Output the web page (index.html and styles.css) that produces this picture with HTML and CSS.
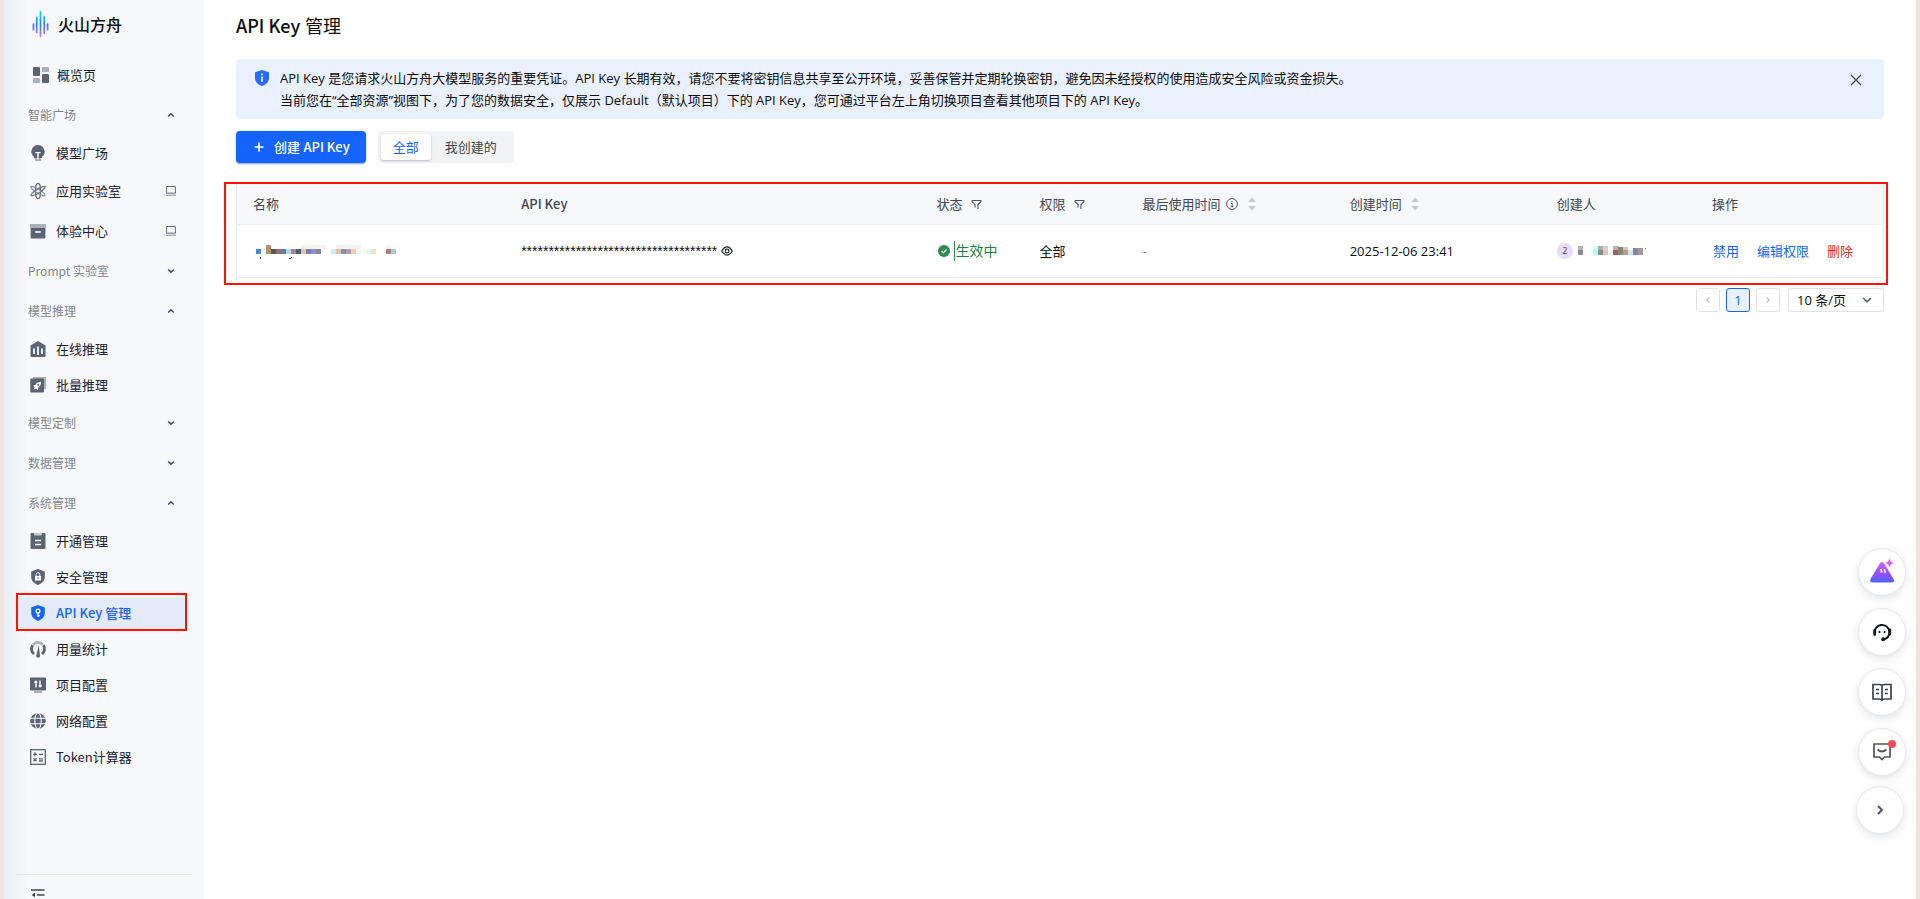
FILE: index.html
```
<!DOCTYPE html>
<html lang="zh-CN">
<head>
<meta charset="utf-8">
<title>API Key 管理</title>
<link rel="stylesheet" href="styles.css">
</head>
<body>
<svg class="defs" aria-hidden="true">
  <defs>
    <linearGradient id="flame" x1="0" y1="0" x2="0" y2="28" gradientUnits="userSpaceOnUse"><stop offset="0" stop-color="#22d8f0"/><stop offset=".5" stop-color="#2b7cff"/><stop offset="1" stop-color="#c07cf5"/></linearGradient>
    <linearGradient id="peak" x1="0" y1="0" x2="0" y2="1"><stop offset="0" stop-color="#d35cf5"/><stop offset=".5" stop-color="#a050fa"/><stop offset="1" stop-color="#4f62fa"/></linearGradient>
    <symbol id="up" viewBox="0 0 10 10"><path d="M2.2 6.5 5 3.8l2.8 2.7" fill="none" stroke="#3d485c" stroke-width="1.5"/></symbol>
    <symbol id="down" viewBox="0 0 10 10"><path d="M2.2 3.5 5 6.2l2.8-2.7" fill="none" stroke="#3d485c" stroke-width="1.5"/></symbol>
    <symbol id="device" viewBox="0 0 10 10"><path d="M.6.5h8.8v6.7H.6z" fill="none" stroke="#626b7a"/><path d="M0 9.3h10" stroke="#8a919d"/></symbol>
    <symbol id="filter" viewBox="0 0 12 12"><path d="M1.2 1.6h9.6v1.6L7.6 6v4.8M1.2 1.6v1.6L4.4 6v3.4" fill="none" stroke="#4c5361" stroke-width="1.2"/></symbol>
    <symbol id="sort" viewBox="0 0 8 14"><path d="M4 .5 7.8 5H.2zM4 13.500.2 9h7.600z" fill="#c2c7d2"/></symbol>
  </defs>
</svg>
<div class="frame">
  <aside class="sidebar">
    <a class="brand" href="#">
      <svg class="brand-icon" viewBox="0 0 18 28"><path d="M1.500 14v6M5 7v16M9 1v26M13 6v18M16.500 14v6" stroke="url(#flame)" stroke-width="1.800" stroke-linecap="round"/></svg>
      <span>火山方舟</span>
    </a>
    <nav class="nav">
      <a class="item overview" href="#"><svg class="icon" viewBox="0 0 16 16"><rect width="7" height="9" rx="1" fill="#5b6474"/><rect x="9" width="7" height="5" rx="1" fill="#aab0ba"/><rect y="11" width="7" height="5" rx="1" fill="#aab0ba"/><rect x="9" y="7" width="7" height="9" rx="1" fill="#5b6474"/></svg>概览页</a>
      <button class="group" type="button">智能广场<svg class="mini"><use href="#up"/></svg></button>
      <a class="item" href="#"><svg class="icon" viewBox="0 0 16 16"><path d="M8 0a6.600 6.600 0 0 0-4 11.800V13h8v-1.200A6.600 6.600 0 0 0 8 0z" fill="#5b6474"/><path d="M5 13h6v3H5z" fill="#aab0ba"/><path d="M5.500 7.600h5M8 7.600V14" stroke="#fff" stroke-width="1.400"/></svg>模型广场</a>
      <a class="item tall" href="#"><svg class="icon" viewBox="0 0 16 16" fill="none" stroke-width="1.300"><ellipse cx="8" cy="8" rx="2.600" ry="7.600" stroke="#5b6474"/><path d="M.8 3.500C3 2.500 15.500 9.500 15 12.500 12.500 14 .5 6.500.8 3.500z" stroke="#8c939f"/><path d="M15.200 3.500C13 2.500.5 9.500 1 12.500c2.500 1.500 14.500-6 14.200-9z" stroke="#6d7684"/></svg>应用实验室<svg class="mini"><use href="#device"/></svg></a>
      <a class="item tall" href="#"><svg class="icon" viewBox="0 0 16 16"><path d="M0 1h16v4H0z" fill="#aab0ba"/><path d="M.6 5h14.800v9.500q0 1-1 1H1.600q-1 0-1-1z" fill="#5b6474"/><path d="M5.200 9h5.600" stroke="#fff" stroke-width="1.600"/></svg>体验中心<svg class="mini"><use href="#device"/></svg></a>
      <button class="group" type="button">Prompt 实验室<svg class="mini"><use href="#down"/></svg></button>
      <button class="group" type="button">模型推理<svg class="mini"><use href="#up"/></svg></button>
      <a class="item" href="#"><svg class="icon" viewBox="0 0 16 16"><path d="m8 0 7.500 4.500V15q0 1-1 1h-13q-1 0-1-1V4.500z" fill="#5b6474"/><path d="M4 7.500V13M8 5.500V14M12 7.500V13" stroke="#fff" stroke-width="1.700"/></svg>在线推理</a>
      <a class="item" href="#"><svg class="icon" viewBox="0 0 16 16"><path d="M3 0h12q1 0 1 1v11h-3V3H3z" fill="#aab0ba"/><rect x=".3" y="1.600" width="13.700" height="14" rx="1" fill="#5b6474"/><path d="M11 4.800c-3.200 0-4.600 1.400-5.500 3L3.200 8.400 4.500 10l-1 2.700 2.700-1L8 13l.4-2.500C10.200 9.400 11 7.800 11 4.800z" fill="#fff"/><circle cx="8.300" cy="7.700" r="1" fill="#5b6474"/></svg>批量推理</a>
      <button class="group" type="button">模型定制<svg class="mini"><use href="#down"/></svg></button>
      <button class="group" type="button">数据管理<svg class="mini"><use href="#down"/></svg></button>
      <button class="group" type="button">系统管理<svg class="mini"><use href="#up"/></svg></button>
      <a class="item" href="#"><svg class="icon" viewBox="0 0 16 16"><rect x=".5" width="15" height="16" rx="1" fill="#5b6474"/><path d="M4 0h8v1.500q0 1-1 1H5q-1 0-1-1z" fill="#c5cad1"/><path d="M5 7.500h6M5 11.500h6" stroke="#fff" stroke-width="1.400"/></svg>开通管理</a>
      <a class="item" href="#"><svg class="icon" viewBox="0 0 16 16"><path d="m8 0 6.800 2.500v6Q14.500 13 8 16 1.500 13 1.200 8.500v-6z" fill="#5b6474"/><rect x="5" y="7" width="6" height="4.500" fill="#fff"/><path d="M6.200 7V5.400a1.800 1.800 0 0 1 3.600 0V7" fill="none" stroke="#fff"/><path d="M8 8.300v1.800" stroke="#5b6474"/></svg>安全管理</a>
      <a class="item active" href="#" aria-current="page"><svg class="icon" viewBox="0 0 16 16"><path d="m8 0 6.800 2.500v6Q14.500 13 8 16 1.500 13 1.200 8.500v-6z" fill="#1664ff"/><circle cx="8" cy="6" r="1.900" fill="none" stroke="#fff" stroke-width="1.300"/><path d="M8 8v4M8 10.600h1.800" stroke="#fff" stroke-width="1.300"/></svg>API Key 管理</a>
      <a class="item" href="#"><svg class="icon" viewBox="0 0 16 16" fill="none" stroke-width="2.800"><path d="M3 3.800a6.400 6.400 0 0 1 10 0" stroke="#aab0ba"/><path d="M4 13A6.400 6.400 0 0 1 2.600 4.300M12 13a6.400 6.400 0 0 0 1.400-8.700" stroke="#5b6474"/><path d="M8.800 4.500 10 15a1.900 1.900 0 0 1-3.800-.5z" fill="#5b6474"/></svg>用量统计</a>
      <a class="item" href="#"><svg class="icon" viewBox="0 0 16 16"><rect y=".5" width="16" height="13" rx="1" fill="#5b6474"/><path d="M4 13.500h8V16H4z" fill="#aab0ba"/><path d="M6 3.500v7M10 3.500v7M4.300 5.200h3M8.700 8.700h3" stroke="#fff" stroke-width="1.400"/></svg>项目配置</a>
      <a class="item" href="#"><svg class="icon" viewBox="0 0 16 16"><circle cx="8" cy="8" r="7.800" fill="#5b6474"/><path d="M0 5.300h16M0 10.700h16" stroke="#f7f8fa" stroke-width="1.100"/><ellipse cx="8" cy="8" rx="3.200" ry="8" fill="none" stroke="#f7f8fa" stroke-width="1.100"/></svg>网络配置</a>
      <a class="item" href="#"><svg class="icon" viewBox="0 0 16 16" fill="none" stroke="#5b6474" stroke-width="1.300"><rect x=".7" y=".7" width="14.600" height="14.600"/><path d="M3 5.300h4M5 3.300v4M9 5.300h4M9 9.800h4M9 12h4M3.500 9.300l3 3M6.500 9.300l-3 3"/></svg>Token计算器</a>
    </nav>
    <div class="side-foot">
      <button class="collapse" type="button" aria-label="收起导航"><svg viewBox="0 0 14 14" fill="none" stroke="#3d4554" stroke-width="1.400"><path d="M0 2h13.500M6 7h7.500M0 12h13.500"/><path d="M4 4.800v4.400L.6 7z" fill="#3d4554" stroke="none"/></svg></button>
    </div>
  </aside>
  <main class="main">
    <h1 class="title"><span class="latin">API Key</span> 管理</h1>
    <section class="notice">
      <svg class="shield" viewBox="0 0 14 16"><path d="m7 0 7 2.300V9q-.5 4.500-7 7Q.5 13.500 0 9V2.300z" fill="#2a6cff"/><path d="M7 3.500v1.700M7 6.500V12" stroke="#fff" stroke-width="1.500"/></svg>
      <p class="notice-text">API Key 是您请求火山方舟大模型服务的重要凭证。API Key 长期有效，请您不要将密钥信息共享至公开环境，妥善保管并定期轮换密钥，避免因未经授权的使用造成安全风险或资金损失。<br>当前您在“全部资源”视图下，为了您的数据安全，仅展示 Default（默认项目）下的 API Key，您可通过平台左上角切换项目查看其他项目下的 API Key。</p>
      <button class="close" type="button" aria-label="关闭"><svg viewBox="0 0 12 12"><path d="m1 1 10 10M11 1 1 11" stroke="#414a5a" stroke-width="1.300"/></svg></button>
    </section>
    <div class="toolbar">
      <button class="create" type="button"><svg viewBox="0 0 10 10"><path d="M5 .5v9M.5 5h9" stroke="#fff" stroke-width="1.700"/></svg><span>创建 <span class="latin">API Key</span></span></button>
      <div class="segment"><button class="seg on" type="button">全部</button><button class="seg" type="button">我创建的</button></div>
    </div>
    <section class="table-box">
      <table class="keys">
        <colgroup><col class="c-name"><col class="c-key"><col class="c-small"><col class="c-small"><col class="c-time"><col class="c-time"><col class="c-user"><col class="c-ops"></colgroup>
        <thead><tr>
          <th>名称</th><th><span class="latin">API Key</span></th>
          <th><div class="head">状态<svg class="filter"><use href="#filter"/></svg></div></th>
          <th><div class="head">权限<svg class="filter"><use href="#filter"/></svg></div></th>
          <th><div class="head tight">最后使用时间<svg class="info" viewBox="0 0 12 12"><circle cx="6" cy="6" r="5.400" fill="none" stroke="#4c5361"/><path d="M6 2.800v1.300M5 5.500h1.200v3M4.700 8.700h2.700" fill="none" stroke="#4c5361"/></svg><svg class="sort"><use href="#sort"/></svg></div></th>
          <th><div class="head">创建时间<svg class="sort"><use href="#sort"/></svg></div></th>
          <th>创建人</th><th>操作</th>
        </tr></thead>
        <tbody><tr>
          <td><svg class="mosaic-name" viewBox="0 0 144 16"><path d="M48 0h25v5H48zM83 0h25v5H83zM133 1h5v4h-5z" fill="#f3f3f6"/><path d="M3 4h5v5H3z" fill="#4a8ac8"/><path d="M13 0h5v9h-5z" fill="#b89064"/><path d="M18 4h5v5h-5z" fill="#505868"/><path d="M23 4h5v5h-5z" fill="#967070"/><path d="M28 4h5v5h-5z" fill="#6080b5"/><path d="M33 4h5v5h-5z" fill="#b0dcea"/><path d="M38 4h5v5h-5z" fill="#a58898"/><path d="M43 4h5v5h-5z" fill="#505c72"/><path d="M48 4h5v5h-5z" fill="#dcc4b0"/><path d="M53 4h5v5h-5z" fill="#8478b0"/><path d="M58 4h5v5h-5z" fill="#8894c4"/><path d="M63 4h5v5h-5z" fill="#8c8490"/><path d="M78 4h5v5h-5z" fill="#c8ecfc"/><path d="M83 4h5v5h-5z" fill="#dcc0b0"/><path d="M88 4h5v5h-5z" fill="#9488ac"/><path d="M93 4h5v5h-5z" fill="#a4a0b8"/><path d="M98 4h5v5h-5z" fill="#f0d0b0"/><path d="M103 4h5v5h-5z" fill="#f8f4f4"/><path d="M108 4h5v5h-5z" fill="#ffffe8"/><path d="M113 4h5v5h-5z" fill="#e4f4f8"/><path d="M118 4h5v5h-5z" fill="#e6e8c4"/><path d="M133 4h5v5h-5z" fill="#b08078"/><path d="M138 4h5v5h-5z" fill="#a8c8e0"/><path d="M7 12h1v2H7zM36 13h2v-1h1v1h-1v1h-2z" fill="#3a4252"/></svg></td>
          <td><div class="secret"><span class="stars">************************************</span><button class="eye" type="button" aria-label="显示"><svg viewBox="0 0 12 10" fill="none" stroke="#20242c" stroke-width="1.200"><path d="M.7 5Q6-3.200 11.300 5 6 13.200.7 5z"/><circle cx="6" cy="5" r="1.800"/></svg></button></div></td>
          <td><div class="status"><svg viewBox="0 0 12 12"><circle cx="6" cy="6" r="6" fill="#2a8a50"/><path d="m3.500 6 1.800 1.800 3.200-3.300" fill="none" stroke="#fff" stroke-width="1.200"/></svg><span class="state">生效中</span></div></td>
          <td>全部</td><td class="dash">-</td><td>2025-12-06 23:41</td>
          <td><div class="user"><span class="avatar">2</span><svg class="mosaic-user" viewBox="0 0 70 10"><path d="M0 0h5v4H0zM35 0h6v4h-6z" fill="#b4b0c4"/><path d="M0 4h5v5H0z" fill="#8c88a0"/><path d="M6 0h4v4H6z" fill="#fffff0"/><path d="M15 0h5v4h-5z" fill="#dcfaf8"/><path d="M15 4h5v5h-5z" fill="#b8fcfc"/><path d="M20 0h5v4h-5z" fill="#acacac"/><path d="M20 4h5v5h-5z" fill="#848c8c"/><path d="M25 0h5v4h-5z" fill="#dccfc8"/><path d="M25 4h5v5h-5zM45 1h5v3h-5z" fill="#e0c4b4"/><path d="M30 4h5v5h-5z" fill="#f0fafc"/><path d="M35 4h5v5h-5z" fill="#a46258"/><path d="M40 1h5v8h-5z" fill="#848884"/><path d="M45 4h5v5h-5z" fill="#b8a084"/><path d="M50 4h5v5h-5z" fill="#d0e4f4"/><path d="M55 2h5v7h-5z" fill="#8088a4"/><path d="M60 2h5v7h-5z" fill="#b0949c"/><path d="M67 2h1v1h-1z" fill="#5878b0"/></svg></div></td>
          <td><div class="ops"><a href="#">禁用</a><a href="#">编辑权限</a><a class="danger" href="#">删除</a></div></td>
        </tr></tbody>
      </table>
    </section>
    <div class="pager">
      <button class="page" type="button" aria-label="上一页" disabled><svg viewBox="0 0 10 10"><path d="M6.300 2.500 3.800 5l2.500 2.500" fill="none" stroke="#bcc2cc" stroke-width="1.400"/></svg></button>
      <button class="page current" type="button">1</button>
      <button class="page" type="button" aria-label="下一页" disabled><svg viewBox="0 0 10 10"><path d="M3.700 2.500 6.200 5 3.700 7.500" fill="none" stroke="#bcc2cc" stroke-width="1.400"/></svg></button>
      <div class="size"><select aria-label="每页条数"><option>10 条/页</option></select><svg viewBox="0 0 10 10"><path d="M1.200 3 5 6.800 8.800 3" fill="none" stroke="#5b6474" stroke-width="1.700"/></svg></div>
    </div>
  </main>
</div>
<div class="floats">
  <button class="float" type="button" aria-label="助手"><svg viewBox="0 0 26 26"><path d="M8 8 1 20q-1 3 2 3h5z" fill="#c5f2f8"/><path d="m17 8 8 12q1.500 3-1 3h-6z" fill="#f8d5f6"/><path d="M10.500 5q2.500-4 5 0l9 15q1.500 3.500-2 3.500h-19q-3.500 0-1.800-3.500z" fill="url(#peak)"/><path d="m11.800 10 1 3.500M15.200 10l1 3.500" stroke="#fff" stroke-width="1.700"/><path d="M20.500-1 22 2.500 25.500 4 22 5.500 20.500 9 19 5.500 15.500 4 19 2.500z" fill="#d45cf0" stroke="#fff" stroke-width=".6"/></svg></button>
  <button class="float" type="button" aria-label="客服"><svg viewBox="0 0 26 26"><path d="M5.500 14.500a7.500 7.500 0 1 1 15-2c0 4.500-2.500 7.500-6.500 8" fill="none" stroke="#11151c" stroke-width="1.900"/><path d="M5.700 11.500v4M20.800 11v4" stroke="#11151c" stroke-width="2.800" stroke-linecap="round"/><circle cx="14.200" cy="20.300" r="2" fill="#11151c"/><circle cx="10.500" cy="13" r="1.100"/><circle cx="15.500" cy="13" r="1.100"/></svg></button>
  <button class="float" type="button" aria-label="文档"><svg viewBox="0 0 26 26" fill="none" stroke="#3d4250" stroke-width="1.700"><path d="M13 6.500q-1-1-3-1H4v14.500h6q2 0 3 1.200 1-1.200 3-1.200h6V5.500h-6q-2 0-3 1zV21M7 10.500h3M7 14.500h3M16 10.500h3M16 14.500h3"/></svg></button>
  <button class="float" type="button" aria-label="反馈"><svg viewBox="0 0 26 26" fill="none" stroke="#4c5565" stroke-width="1.700"><path d="M5 5h16v13h-5.500L13 20.500 10.500 18H5z"/><path d="M8.500 10.500q4.500 4 9 0"/><circle cx="23" cy="5" r="4" fill="#f84c54" stroke="none"/></svg></button>
  <button class="float last" type="button" aria-label="收起"><svg viewBox="0 0 26 26"><path d="m11 9 4 4-4 4" fill="none" stroke="#4c5565" stroke-width="2"/></svg></button>
</div>
</body>
</html>
```
FILE: styles.css
```
* { box-sizing: border-box; }
body { margin: 0; color: #0c0d0e; background: #fff; font: 13px/22px "Open Sans", "Noto Sans CJK SC", sans-serif; }
button, select { font: inherit; color: inherit; border: 0; background: none; padding: 0; margin: 0; }
a { color: inherit; text-decoration: none; }
svg { display: block; flex: none; overflow: visible; }
.defs { width: 0; height: 0; position: absolute; }
.latin { font-family: "Noto Sans CJK SC", sans-serif; font-weight: 500; }

.frame { display: flex; height: 100vh; border: solid #f1e2e1; border-width: 0 4px; }
.sidebar { display: flex; flex-direction: column; flex: 0 0 200px; overflow: hidden; font-family: "Noto Sans CJK SC", sans-serif; background: linear-gradient(90deg, #e9eef2, #f7f8fa 24px); }
.brand { display: flex; align-items: center; gap: 9px; flex: none; height: 47px; padding-left: 28px; font-size: 16px; font-weight: 500; }
.brand-icon { width: 17px; height: 28px; }
.nav { display: flex; flex-direction: column; flex: 1; min-height: 0; padding: 10px 16px 0 12px; }
.item { display: flex; align-items: center; gap: 10px; flex: none; height: 36px; padding: 0 12px 0 14px; color: #1b2130; position: relative; }
.item.tall { height: 40px; }
.item.overview { gap: 8px; padding-left: 17px; margin-bottom: 2px; }
.icon { width: 16px; height: 16px; }
.mini { width: 10px; height: 10px; margin-left: auto; }
.group { display: flex; align-items: center; flex: none; height: 40px; padding: 0 12px; font-size: 12px; color: #80868f; text-align: left; }
.item.active { color: #1664ff; font-weight: 500; background: linear-gradient(#e3ebfa, #e3ebfa) 0 2px / 100% 32px no-repeat; }
.item.active::after { content: ""; position: absolute; inset: -2px 1px 0 0; border: 2px solid #fb1405; }
.side-foot { flex: 0 0 25px; min-height: 0; overflow: hidden; margin: 0 12px; padding: 13px 0 0 15px; border-top: 1px solid #e6e8ec; }
.collapse { display: block; }
.collapse svg { width: 14px; height: 14px; }

.main { flex: 1; min-width: 0; padding: 0 32px; }
.title { margin: 0; padding: 12px 0 20px; font-size: 18px; line-height: 26px; height: 59px; font-weight: 400; }
.notice { display: flex; padding: 8px 22px 8px 19px; background: #e9f0ff; border-radius: 4px; }
.shield { width: 14px; height: 16px; margin-top: 3px; }
.notice-text { flex: 1; margin: 0 11px; }
.close { width: 12px; height: 26px; }
.close svg { width: 12px; height: 12px; }
.toolbar { display: flex; gap: 12px; padding: 12px 0 21px; }
.create { display: flex; align-items: center; gap: 10px; height: 32px; padding: 0 16px 0 18px; border-radius: 4px; color: #fff; background: #1664ff; font-weight: 500; box-shadow: 0 1px 2px #0b3fae80; }
.create svg { width: 10px; height: 10px; }
.segment { display: flex; padding: 3px; border-radius: 4px; background: #f2f3f5; }
.seg { padding: 0 14px; color: #41464f; border-radius: 3px; line-height: 26px; }
.seg.on { padding: 0 12px; color: #1664ff; background: #fff; box-shadow: 0 1px 2px #1b213040; }

.table-box { position: relative; }
.table-box::after { content: ""; position: absolute; inset: -2px -4px -7px -12px; border: 2px solid #fb1405; pointer-events: none; }
.keys { width: 100%; table-layout: fixed; border-collapse: separate; border-spacing: 0; border: solid #eaedf1; border-width: 0 1px; }
.c-name { width: 268px; }
.c-key { width: 415px; }
.c-small { width: 103px; }
.c-time { width: 207px; }
.c-user { width: 155px; }
.c-ops { width: 187px; }
.keys th, .keys td { padding: 0 0 0 16px; text-align: left; border-bottom: 1px solid #eaedf1; white-space: nowrap; }
.keys th { height: 41px; color: #41464f; background: #f6f8fa; font-weight: 400; }
.keys td { height: 53px; }
.head { display: flex; align-items: center; gap: 9px; }
.head.tight { gap: 5px; }
.filter { width: 11px; height: 11px; }
.info { width: 12px; height: 12px; }
.sort { width: 8px; height: 14px; }
.tight .sort { margin-left: 5px; }
.mosaic-name { width: 144px; height: 16px; margin-top: 4px; }
.secret { display: flex; align-items: center; gap: 4px; }
.stars { font: 14px/22px "Liberation Sans", sans-serif; }
.eye svg { width: 12px; height: 10px; }
.status { display: flex; align-items: center; gap: 4px; padding-left: 2px; }
.status svg { width: 12px; height: 12px; }
.state { border-left: 1px solid #2a8a50; color: #1c8048; font-size: 14px; line-height: 20px; }
.dash { color: #7a808a; }
.user { display: flex; align-items: center; gap: 5px; }
.avatar { width: 16px; height: 16px; border-radius: 50%; background: #e8dcff; color: #54368c; font-size: 9px; line-height: 16px; text-align: center; }
.mosaic-user { width: 70px; height: 10px; }
.ops { display: flex; gap: 18px; padding-left: 1px; color: #1664ff; }
.danger { color: #d7312a; }

.pager { display: flex; justify-content: flex-end; gap: 6px; padding-top: 10px; }
.page { display: flex; align-items: center; justify-content: center; width: 24px; height: 24px; border: 1px solid #dde1e8; border-radius: 3px; }
.page svg { width: 10px; height: 10px; }
.page.current { color: #1664ff; background: #e9f0ff; border-color: #1664ff; }
.size { display: flex; align-items: center; width: 96px; margin-left: 2px; padding-right: 11px; border: 1px solid #dde1e8; border-radius: 3px; }
.size select { flex: 1; min-width: 0; height: 22px; padding-left: 8px; appearance: none; }
.size svg { width: 10px; height: 10px; pointer-events: none; }

.floats { position: fixed; right: 14px; bottom: 65px; display: flex; flex-direction: column; gap: 12px; }
.float { display: flex; align-items: center; justify-content: center; width: 48px; height: 48px; border: 1px solid #e6e8f0; border-radius: 50%; background: #fff; box-shadow: 0 3px 8px #1b21301f; }
.float svg { width: 26px; height: 26px; }
.float.last { margin: -2px 2px 0 -2px; }
```
